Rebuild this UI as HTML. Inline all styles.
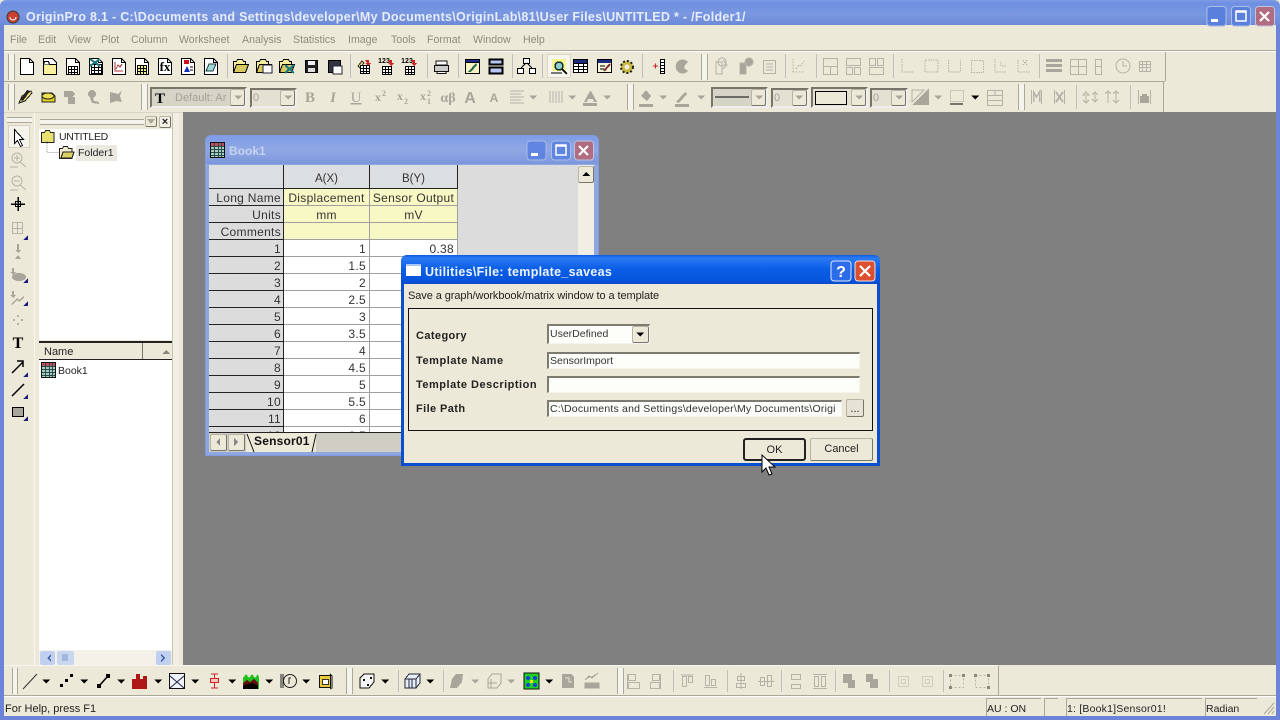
<!DOCTYPE html>
<html><head><meta charset="utf-8"><title>OriginPro 8.1</title>
<style>
html,body{margin:0;padding:0}
body{width:1280px;height:720px;overflow:hidden;position:relative;background:#ece9d8;font:11px "Liberation Sans",sans-serif;color:#000}
div{position:absolute;box-sizing:border-box}
.t{white-space:nowrap;line-height:16px}
.m{color:#8f8c80;top:32px;font-size:10.6px}
.r{text-align:right}
.c{text-align:center}
.b{font-weight:bold}
.cell,.hd,.y{font-size:12px;letter-spacing:.3px;line-height:18px;height:17px;color:#333;white-space:nowrap}
.cell{background:#fff;border-right:1px solid #a0a0a0;border-bottom:1px solid #a0a0a0;text-align:right;padding-right:3px}
.hd{background:#dcdcdc;border-right:1px solid #222;border-bottom:1px solid #222;text-align:right;padding-right:2px}
.y{background:#f8f8c4;border-right:1px solid #a0a0a0;border-bottom:1px solid #a0a0a0;text-align:center}
.in{background:#fdfdfa;border-top:2px solid #7d7b70;border-left:2px solid #7d7b70;border-bottom:1px solid #f5f4ec;border-right:1px solid #f5f4ec;line-height:15px;padding-left:1px;color:#333;white-space:nowrap;overflow:hidden}
.sep{width:2px;background:linear-gradient(90deg,#aca899,#fff)}
.cb{background:#e4e1d2;border:2px solid #77756a;border-right-color:#eee;border-bottom-color:#eee}
.btn{background:#ece9d8;border:1px solid #b8b5a6;border-right-color:#77756a;border-bottom-color:#77756a;border-radius:2px;text-align:center;color:#222}
</style></head><body>

<!-- title bar -->
<div style="left:0;top:0;width:1280px;height:25px;background:linear-gradient(180deg,#7f9be4 0,#6e90e2 3px,#7a97e0 14px,#6b8ad8 25px);border-radius:6px 6px 0 0"></div>
<div class="t b" style="left:26px;top:9px;font-size:12.5px;color:#e6ecfa;letter-spacing:.29px">OriginPro 8.1 - C:\Documents and Settings\developer\My Documents\OriginLab\81\User Files\UNTITLED * - /Folder1/</div>

<!-- frame sides -->
<div style="left:0;top:25px;width:4px;height:695px;background:#6c84d8"></div>
<div style="left:1276px;top:25px;width:4px;height:695px;background:#6c84d8"></div>
<div style="left:0;top:716px;width:1280px;height:4px;background:#6c84d8"></div>

<!-- menu -->
<div class="t m" style="left:10px">File</div>
<div class="t m" style="left:38px">Edit</div>
<div class="t m" style="left:68px">View</div>
<div class="t m" style="left:101px">Plot</div>
<div class="t m" style="left:131px">Column</div>
<div class="t m" style="left:179px">Worksheet</div>
<div class="t m" style="left:242px">Analysis</div>
<div class="t m" style="left:293px">Statistics</div>
<div class="t m" style="left:348px">Image</div>
<div class="t m" style="left:391px">Tools</div>
<div class="t m" style="left:427px">Format</div>
<div class="t m" style="left:473px">Window</div>
<div class="t m" style="left:523px">Help</div>

<!-- toolbar lines -->
<div style="left:4px;top:50px;width:1272px;height:2px;background:linear-gradient(#aca899 50%,#fff 50%)"></div>
<div style="left:4px;top:81px;width:1161px;height:1px;background:#aca899"></div>
<div style="left:1165px;top:52px;width:1px;height:29px;background:#aca899"></div>
<div style="left:1163px;top:82px;width:1px;height:30px;background:#aca899"></div>

<!-- grips row 1 / 2 -->
<div style="left:8px;top:54px;width:7px;height:26px;border-left:1px solid #aca899;border-right:1px solid #aca899;background:#f5f4ec"></div>
<div style="left:8px;top:84px;width:7px;height:26px;border-left:1px solid #aca899;border-right:1px solid #aca899;background:#f5f4ec"></div>
<div style="left:141px;top:84px;width:7px;height:26px;border-left:1px solid #aca899;border-right:1px solid #aca899;background:#f5f4ec"></div>
<div style="left:627px;top:84px;width:7px;height:26px;border-left:1px solid #aca899;border-right:1px solid #aca899;background:#f5f4ec"></div>
<div style="left:701px;top:54px;width:7px;height:26px;border-left:1px solid #aca899;border-right:1px solid #aca899;background:#f5f4ec"></div>
<div style="left:1018px;top:84px;width:7px;height:26px;border-left:1px solid #aca899;border-right:1px solid #aca899;background:#f5f4ec"></div>

<!-- separators row 1 -->
<div class="sep" style="left:227px;top:54px;height:24px"></div>
<div class="sep" style="left:350px;top:54px;height:24px"></div>
<div class="sep" style="left:427px;top:54px;height:24px"></div>
<div class="sep" style="left:458px;top:54px;height:24px"></div>
<div class="sep" style="left:512px;top:54px;height:24px"></div>
<div class="sep" style="left:542px;top:54px;height:24px"></div>
<div class="sep" style="left:642px;top:54px;height:24px"></div>
<div class="sep" style="left:785px;top:54px;height:24px"></div>
<div class="sep" style="left:816px;top:54px;height:24px"></div>
<div class="sep" style="left:893px;top:54px;height:24px"></div>
<div class="sep" style="left:1039px;top:54px;height:24px"></div>
<div class="sep" style="left:1076px;top:85px;height:24px"></div>
<div class="sep" style="left:1130px;top:85px;height:24px"></div>

<!-- active toggle button -->
<div style="left:547px;top:54px;width:24px;height:24px;background:#f6f5ee;border:1px solid #d9d6c6"></div>

<!-- row 2 combos -->
<div class="cb" style="left:150px;top:87px;width:97px;height:21px;background:#d6d3c7"></div>
<div class="t" style="left:175px;top:90px;color:#a5a296">Default: Ar</div>
<div class="btn" style="left:230px;top:89px;width:15px;height:17px"></div>
<div class="cb" style="left:250px;top:88px;width:47px;height:20px"></div>
<div class="t" style="left:253px;top:90px;color:#a5a296">0</div>
<div class="btn" style="left:280px;top:90px;width:15px;height:16px"></div>
<div class="cb" style="left:711px;top:87px;width:57px;height:21px;background:#d6d3c7"></div>
<div class="btn" style="left:751px;top:89px;width:15px;height:17px"></div>
<div class="cb" style="left:771px;top:88px;width:38px;height:20px"></div>
<div class="t" style="left:774px;top:90px;color:#a5a296">0</div>
<div class="btn" style="left:792px;top:90px;width:15px;height:16px"></div>
<div class="cb" style="left:811px;top:87px;width:57px;height:21px;background:#e4e1d2"></div>
<div class="btn" style="left:851px;top:89px;width:15px;height:17px"></div>
<div class="cb" style="left:870px;top:88px;width:38px;height:20px"></div>
<div class="t" style="left:873px;top:90px;color:#a5a296">0</div>
<div class="btn" style="left:891px;top:90px;width:15px;height:16px"></div>

<!-- MDI client -->
<div style="left:183px;top:112px;width:1093px;height:553px;background:#808080"></div>
<div style="left:4px;top:112px;width:179px;height:1px;background:#d8d5c6"></div>

<!-- left tool bar -->
<div style="left:7px;top:117px;width:25px;height:6px;border-top:1px solid #aca899;border-bottom:1px solid #aca899;background:#f5f4ec"></div>
<div style="left:8px;top:125px;width:22px;height:23px;background:#f5f4ec;border:1px solid #d4d1c2"></div>
<div style="left:34px;top:113px;width:1px;height:552px;background:#f8f7f0"></div>

<!-- project explorer -->
<div style="left:40px;top:119px;width:104px;height:6px;border-top:1px solid #aca899;border-bottom:1px solid #aca899;background:#f5f4ec"></div>
<div class="btn" style="left:145px;top:116px;width:12px;height:11px"></div>
<div class="btn b" style="left:159px;top:116px;width:12px;height:12px;line-height:10px;background:#f3f1e6;font-size:11px">×</div>
<div style="left:39px;top:129px;width:133px;height:211px;background:#fff"></div>
<div style="left:76px;top:145px;width:41px;height:16px;background:#ece9e0"></div>
<div class="t" style="left:59px;top:129px;color:#222;font-size:10.5px;letter-spacing:-.3px">UNTITLED</div>
<div class="t" style="left:78px;top:145px;color:#222;font-size:10.5px">Folder1</div>
<div style="left:39px;top:341px;width:133px;height:2px;background:#222"></div>
<div style="left:39px;top:343px;width:104px;height:16px;background:#ece9d8;border-right:1px solid #77756a"></div>
<div style="left:143px;top:343px;width:29px;height:16px;background:#ece9d8"></div>
<div class="t" style="left:44px;top:344px;color:#222">Name</div>
<div style="left:39px;top:359px;width:133px;height:1px;background:#222"></div>
<div style="left:39px;top:360px;width:133px;height:290px;background:#fff"></div>
<div class="t" style="left:58px;top:363px;color:#222;font-size:10.5px">Book1</div>
<div style="left:39px;top:650px;width:133px;height:15px;background:#f3f1e8"></div>
<div style="left:40px;top:651px;width:15px;height:14px;background:#c1d0f0;border-radius:2px"></div>
<div style="left:57px;top:651px;width:17px;height:14px;background:#c9d6f0;border-radius:2px"></div>
<div style="left:156px;top:651px;width:15px;height:14px;background:#c1d0f0;border-radius:2px"></div>
<div style="left:172px;top:113px;width:1px;height:552px;background:#c9c6b6"></div>
<div style="left:173px;top:113px;width:6px;height:552px;background:#f1efe4"></div>

<!-- Book1 window -->
<div style="left:205px;top:135px;width:394px;height:321px;background:#8fa6de;border:1px solid #7f9ae0;border-radius:6px 6px 0 0"></div>
<div style="left:206px;top:136px;width:392px;height:28px;background:linear-gradient(180deg,#7e9ce6,#90a8e4 50%,#7c96dc);border-radius:6px 6px 0 0"></div>
<div class="t b" style="left:229px;top:143px;font-size:12px;color:#c5d2f0">Book1</div>
<div style="left:209px;top:165px;width:369px;height:268px;background:#dcdcdc;overflow:hidden">
  <div style="left:0;top:0;width:75px;height:24px;background:#dcdfe2;border-right:1px solid #222;border-bottom:1px solid #222"></div>
  <div class="c" style="left:75px;top:0;width:86px;height:24px;background:#dcdfe2;border-right:1px solid #222;border-bottom:1px solid #222;line-height:28px;color:#333;font-size:11.5px">A(X)</div>
  <div class="c" style="left:161px;top:0;width:88px;height:24px;background:#dcdfe2;border-right:1px solid #222;border-bottom:1px solid #222;line-height:28px;color:#333;font-size:11.5px">B(Y)</div>

  <div class="hd" style="left:0;top:24px;width:75px">Long Name</div><div class="y" style="left:75px;top:24px;width:86px">Displacement</div><div class="y" style="left:161px;top:24px;width:88px">Sensor Output</div>
  <div class="hd" style="left:0;top:41px;width:75px">Units</div><div class="y" style="left:75px;top:41px;width:86px">mm</div><div class="y" style="left:161px;top:41px;width:88px">mV</div>
  <div class="hd" style="left:0;top:58px;width:75px">Comments</div><div class="y" style="left:75px;top:58px;width:86px"></div><div class="y" style="left:161px;top:58px;width:88px"></div>

  <div class="hd" style="left:0;top:75px;width:75px">1</div><div class="cell" style="left:75px;top:75px;width:86px">1</div><div class="cell" style="left:161px;top:75px;width:88px">0.38</div>
  <div class="hd" style="left:0;top:92px;width:75px">2</div><div class="cell" style="left:75px;top:92px;width:86px">1.5</div><div class="cell" style="left:161px;top:92px;width:88px"></div>
  <div class="hd" style="left:0;top:109px;width:75px">3</div><div class="cell" style="left:75px;top:109px;width:86px">2</div><div class="cell" style="left:161px;top:109px;width:88px"></div>
  <div class="hd" style="left:0;top:126px;width:75px">4</div><div class="cell" style="left:75px;top:126px;width:86px">2.5</div><div class="cell" style="left:161px;top:126px;width:88px"></div>
  <div class="hd" style="left:0;top:143px;width:75px">5</div><div class="cell" style="left:75px;top:143px;width:86px">3</div><div class="cell" style="left:161px;top:143px;width:88px"></div>
  <div class="hd" style="left:0;top:160px;width:75px">6</div><div class="cell" style="left:75px;top:160px;width:86px">3.5</div><div class="cell" style="left:161px;top:160px;width:88px"></div>
  <div class="hd" style="left:0;top:177px;width:75px">7</div><div class="cell" style="left:75px;top:177px;width:86px">4</div><div class="cell" style="left:161px;top:177px;width:88px"></div>
  <div class="hd" style="left:0;top:194px;width:75px">8</div><div class="cell" style="left:75px;top:194px;width:86px">4.5</div><div class="cell" style="left:161px;top:194px;width:88px"></div>
  <div class="hd" style="left:0;top:211px;width:75px">9</div><div class="cell" style="left:75px;top:211px;width:86px">5</div><div class="cell" style="left:161px;top:211px;width:88px"></div>
  <div class="hd" style="left:0;top:228px;width:75px">10</div><div class="cell" style="left:75px;top:228px;width:86px">5.5</div><div class="cell" style="left:161px;top:228px;width:88px"></div>
  <div class="hd" style="left:0;top:245px;width:75px">11</div><div class="cell" style="left:75px;top:245px;width:86px">6</div><div class="cell" style="left:161px;top:245px;width:88px"></div>
  <div class="hd" style="left:0;top:262px;width:75px">12</div><div class="cell" style="left:75px;top:262px;width:86px">6.5</div><div class="cell" style="left:161px;top:262px;width:88px"></div>
</div>
<div style="left:578px;top:165px;width:16px;height:268px;background:#f1efe4"></div>
<div class="btn" style="left:578px;top:166px;width:16px;height:17px"></div>
<div style="left:209px;top:432px;width:385px;height:20px;background:#cfcdc4;border-top:1px solid #222"></div>
<div class="btn" style="left:210px;top:434px;width:17px;height:17px"></div>
<div class="btn" style="left:228px;top:434px;width:17px;height:17px"></div>
<div style="left:246px;top:433px;width:70px;height:19px;background:#ece9d8"></div>
<div class="t b" style="left:254px;top:433px;font-size:12px;color:#111;letter-spacing:.2px">Sensor01</div>

<!-- dialog -->
<div style="left:401px;top:255px;width:479px;height:211px;background:#ece9d8;border:3px solid #0a4fd0;border-top:0;border-radius:6px 6px 0 0"></div>
<div style="left:401px;top:255px;width:479px;height:29px;background:linear-gradient(180deg,#0a5ae0,#2c7af2 3px,#0a5ee6 14px,#0654dc 26px,#0a48c4);border-radius:6px 6px 0 0"></div>
<div style="left:406px;top:264px;width:15px;height:12px;background:#fff;border-top:2px solid #a9c6f5"></div>
<div class="t b" style="left:425px;top:264px;font-size:12.5px;color:#eef3fd;letter-spacing:.3px">Utilities\File: template_saveas</div>
<div class="t" style="left:408px;top:288px;color:#222;letter-spacing:-.08px">Save a graph/workbook/matrix window to a template</div>
<div style="left:408px;top:308px;width:465px;height:123px;border:1px solid #111"></div>
<div class="t b" style="left:416px;top:328px;color:#222;letter-spacing:.4px">Category</div>
<div class="t b" style="left:416px;top:353px;color:#222;letter-spacing:.55px">Template Name</div>
<div class="t b" style="left:416px;top:377px;color:#222;letter-spacing:.5px">Template Description</div>
<div class="t b" style="left:416px;top:401px;color:#222;letter-spacing:.4px">File Path</div>
<div class="in" style="left:547px;top:324px;width:103px;height:20px;line-height:17px;font-size:10.5px">UserDefined</div>
<div class="btn" style="left:632px;top:326px;width:17px;height:17px"></div>
<div class="in" style="left:547px;top:352px;width:313px;height:17px;font-size:10.5px">SensorImport</div>
<div class="in" style="left:547px;top:376px;width:313px;height:17px"></div>
<div class="in" style="left:547px;top:400px;width:295px;height:17px;font-size:10.5px;letter-spacing:.2px">C:\Documents and Settings\developer\My Documents\Origi</div>
<div class="btn" style="left:846px;top:399px;width:18px;height:18px;line-height:18px;background:#e6e3d4">...</div>
<div class="btn" style="left:743px;top:438px;width:63px;height:23px;line-height:21px;border:2px solid #222;border-radius:3px">OK</div>
<div class="btn" style="left:810px;top:438px;width:63px;height:23px;line-height:21px">Cancel</div>

<!-- bottom toolbar -->
<div style="left:4px;top:665px;width:995px;height:31px;border-top:1px solid #f7f6ee;border-right:1px solid #aca899"></div>
<div style="left:4px;top:695px;width:1272px;height:2px;background:linear-gradient(#aca899 50%,#fff 50%)"></div>
<div style="left:12px;top:668px;width:6px;height:26px;border-left:1px solid #aca899;border-right:1px solid #aca899;background:#f5f4ec"></div>
<div style="left:346px;top:668px;width:7px;height:26px;border-left:1px solid #aca899;border-right:1px solid #aca899;background:#f5f4ec"></div>
<div style="left:617px;top:668px;width:7px;height:26px;border-left:1px solid #aca899;border-right:1px solid #aca899;background:#f5f4ec"></div>
<div class="sep" style="left:398px;top:670px;height:22px"></div>
<div class="sep" style="left:443px;top:670px;height:22px"></div>
<div class="sep" style="left:673px;top:670px;height:22px"></div>
<div class="sep" style="left:727px;top:670px;height:22px"></div>
<div class="sep" style="left:781px;top:670px;height:22px"></div>
<div class="sep" style="left:835px;top:670px;height:22px"></div>
<div class="sep" style="left:889px;top:670px;height:22px"></div>
<div class="sep" style="left:943px;top:670px;height:22px"></div>

<!-- status -->
<div class="t" style="left:5px;top:701px;color:#222">For Help, press F1</div>
<div style="left:986px;top:698px;width:55px;height:18px;border-top:1px solid #aca899;border-left:1px solid #aca899"></div>
<div class="t" style="left:987px;top:701px;color:#222;font-size:10.5px">AU : ON</div>
<div style="left:1044px;top:698px;width:14px;height:18px;border-top:1px solid #aca899;border-left:1px solid #aca899"></div>
<div style="left:1066px;top:698px;width:136px;height:18px;border-top:1px solid #aca899;border-left:1px solid #aca899"></div>
<div class="t" style="left:1067px;top:701px;color:#222;font-size:10.5px;letter-spacing:.2px">1: [Book1]Sensor01!</div>
<div style="left:1205px;top:698px;width:52px;height:18px;border-top:1px solid #aca899;border-left:1px solid #aca899"></div>
<div class="t" style="left:1206px;top:701px;color:#222;font-size:10.5px">Radian</div>

<!-- icons -->
<svg width="1280" height="720" viewBox="0 0 1280 720" style="position:absolute;left:0;top:0;pointer-events:none" shape-rendering="crispEdges">
<defs>
<g id="doc"><path d="M-6.500-7.500h9l4 4v12h-13z" fill="#fff" stroke="#000"/><path d="M2.500-7.500v4h4" fill="none" stroke="#000"/></g>
<g id="ydoc"><path d="M-6.500-7.500h9l4 4v12h-13z" fill="#fff" stroke="#000"/><path d="M-6.500-1.500h13v10h-13z" fill="#f8f09a" stroke="#000"/><path d="M-6.500-1.500l1-3h4l1 3" fill="#fff" stroke="#000"/></g>
<g id="grd"><path d="M-3.500-.5h9v8h-9zM-3.500 2.500h9M-3.500 5.500h9M-.5-.5v8M2.500-.5v8" fill="#fff" stroke="#000"/></g>
<g id="wb"><use href="#doc"/><path d="M-4.500-1.500h10v9h-10zM-4.500 1.500h10M-4.500 4.500h10M-1.500-1.500v9M2.500-1.500v9" fill="none" stroke="#000"/></g>
<g id="gd"><path d="M-5.500-4.500h11v10h-11zM-5.500-1.500h11M-5.500 1.500h11M-2.500-4.500v10M1.500-4.500v10" fill="none" stroke="#b5b2a7"/></g>
<g id="fold"><path d="M-8.500 6.500v-11h3l1-2h5l1 2h2v3" fill="#f6ee9a" stroke="#000"/><path d="M-8.500 6.500l3-8h12l-3 8z" fill="#d8c860" stroke="#000"/></g>
<path id="ar" d="M-4-1.500h8l-4 4z" fill="#000"/>
<path id="ag" d="M-4-1.500h8l-4 4z" fill="#a8a59a"/>
<g id="book"><rect x="-7.500" y="-7.500" width="14" height="15" fill="#a8d0c0" stroke="#111"/><rect x="-7" y="-7" width="13" height="3" fill="#c05060"/><path d="M-7-3.500h13M-7-.5h13M-7 2.500h13M-7 5.500h13M-3.500-7v14M.5-7v14M3.500-7v14" stroke="#2a4a4a" fill="none"/></g>
<path id="ftri" d="M0 0l5-5v5z" fill="#1a1a80"/>
</defs>

<!-- app icon -->
<g shape-rendering="auto"><circle cx="13" cy="17" r="6" fill="#c84030" stroke="#3a3a3a"/><path d="M10 17a3 3 0 1 0 6 0" stroke="#fff" fill="none"/></g>
<!-- caption buttons main -->
<g shape-rendering="auto">
<rect x="1207" y="6.500" width="19" height="19.500" rx="3" fill="#5a80dc" stroke="#a9bde8"/><rect x="1211" y="19" width="7" height="3" fill="#fff"/>
<rect x="1231.500" y="6.500" width="19" height="19.500" rx="3" fill="#5a80dc" stroke="#a9bde8"/><path d="M1236 11h10v10h-10zM1236 12h10" fill="none" stroke="#fff" stroke-width="1.500"/>
<rect x="1255.500" y="6.500" width="19" height="19.500" rx="3" fill="#b06c80" stroke="#c0c4e0"/><path d="M1260 12l9 9M1269 12l-9 9" stroke="#fff" stroke-width="2.200"/>
<rect x="527" y="141" width="19" height="19" rx="3" fill="#5f85e0" stroke="#a9bde8"/><rect x="531" y="153" width="7" height="3" fill="#fff"/>
<rect x="551.500" y="141" width="19" height="19" rx="3" fill="#5f85e0" stroke="#a9bde8"/><path d="M556 145h10v10h-10zM556 146h10" fill="none" stroke="#fff" stroke-width="1.500"/>
<rect x="574.500" y="141" width="19" height="19" rx="3" fill="#b06c80" stroke="#c0c4e0"/><path d="M579 146l9 9M588 146l-9 9" stroke="#fff" stroke-width="2.200"/>
<rect x="831" y="261" width="20" height="20" rx="3" fill="#2d6ce8" stroke="#e0e8fa"/><text x="841" y="277" font-family="Liberation Sans" font-weight="bold" font-size="16" fill="#fff" text-anchor="middle">?</text>
<rect x="855" y="261" width="20" height="20" rx="3" fill="#dc5030" stroke="#f4e0d8"/><path d="M860 266l10 10M870 266l-10 10" stroke="#fff" stroke-width="2.200"/>
</g>

<!-- row 1 -->
<use href="#doc" x="27" y="66"/>
<use href="#ydoc" x="50" y="66"/>
<use href="#doc" x="73" y="66"/><use href="#grd" x="72" y="67"/>
<use href="#wb" x="96" y="66"/><path d="M90 59l10 7M100 59l-10 7" stroke="#1a7a80" stroke-width="2"/>
<use href="#doc" x="119" y="66"/><path d="M115 62v9h8M116 69l2-4 2 2 2-3" fill="none" stroke="#b03030"/>
<use href="#doc" x="142" y="66"/><path d="M137.500 65.500h9v9h-9zM137.500 68.500h9M137.500 71.500h9M140.500 65.500v9M143.500 65.500v9" fill="#f2ee90" stroke="#000"/>
<use href="#doc" x="165" y="66"/><text x="165" y="71" font-family="Liberation Serif" font-weight="bold" font-size="13" text-anchor="middle">fx</text>
<use href="#doc" x="188" y="66"/><rect x="184" y="60" width="5" height="4" fill="#d01020"/><path d="M187 66l-3 6h6z" fill="#1030c0"/><path d="M190 67h3M190 70h3" stroke="#000"/>
<use href="#doc" x="211" y="66"/><path d="M206 71l3-7h7l-3 7z" fill="#a0d8d8" stroke="#204040"/>
<use href="#fold" x="242" y="66"/>
<use href="#fold" x="265" y="66"/><rect x="263" y="65" width="9" height="8" fill="#fff" stroke="#223"/>
<use href="#fold" x="288" y="66"/><path d="M285 65l9 8M294 65l-9 8" stroke="#1a7a80" stroke-width="2"/>
<path d="M305.500 60.500h12v12h-12z" fill="#222" stroke="#000"/><rect x="308" y="61" width="7" height="4" fill="#eee"/><rect x="308" y="68" width="7" height="4" fill="#ddd"/>
<path d="M328.500 60.500h12v12h-12z" fill="#334" stroke="#000"/><rect x="333" y="66" width="9" height="8" fill="#fff" stroke="#223"/>
<path d="M358 66l4-5 2 2-4 5z" fill="#e0d060" stroke="#333"/><path d="M365 60h4v3h2l-3 3-3-3h2z" fill="#d02020"/><use href="#grd" x="364" y="66"/>
<text x="384" y="63" font-size="7" font-weight="bold" font-family="Liberation Sans" text-anchor="middle">123</text><path d="M388 60h4v3h2l-3 3-3-3h2z" fill="#d02020"/><use href="#grd" x="386" y="67"/>
<text x="407" y="63" font-size="7" font-weight="bold" font-family="Liberation Sans" text-anchor="middle">123</text><path d="M411 60h4v3h2l-3 3-3-3h2z" fill="#d02020"/><use href="#grd" x="409" y="67"/>
<path d="M436 61h11v4h-11z" fill="#fff" stroke="#111"/><path d="M434.500 65.500h14v6h-14z" fill="#ccc" stroke="#111"/><path d="M437 71.500h9v2h-9z" fill="#fff" stroke="#111"/>
<path d="M465.500 59.500h14v14h-14z" fill="#f8f4c0" stroke="#000"/><path d="M465.500 59.500h14v3h-14z" fill="#1a2a90" stroke="#000"/><path d="M468 72l8-9 1 2-6 7z" fill="#2a6a50"/>
<path d="M489.500 59.500h13v5h-13zM489.500 67.500h13v6h-13z" fill="#b8c8f4" stroke="#000" stroke-width="2"/>
<path d="M523.500 58.500h6v5h-6zM517.500 68.500h6v5h-6zM529.500 68.500h6v5h-6zM526 63l-5 5M527 63l5 5" fill="#fff" stroke="#000"/>
<rect x="552" y="59" width="14" height="12" fill="#f8f490"/><circle cx="559" cy="66" r="4" fill="#90d0d0" stroke="#103030" stroke-width="1.500"/><path d="M562 69l5 5" stroke="#000" stroke-width="2"/><path d="M551 73h11" stroke="#000"/>
<path d="M573.500 59.500h14v13h-14zM573.500 63.500h14M573.500 66.500h14M573.500 69.500h14M578.500 63.500v9M583.500 63.500v9" fill="#fff" stroke="#000"/><rect x="574" y="60" width="13" height="3" fill="#1a2a80"/>
<path d="M597.500 59.500h14v13h-14z" fill="#f8f4d8" stroke="#000"/><rect x="598" y="60" width="13" height="3" fill="#1a2a80"/><path d="M600 66h5M600 69h4" stroke="#000"/><path d="M604 71l6-7" stroke="#803030" stroke-width="2"/>
<g shape-rendering="auto"><circle cx="627" cy="67" r="6" fill="#c8b840" stroke="#222" stroke-width="2" stroke-dasharray="2 2"/><circle cx="627" cy="67" r="2.500" fill="#f4ece0"/></g>
<path d="M653 66h5M655.500 63.500v5" stroke="#d02020"/><path d="M660.500 59.500h4v14h-4zM660.500 62.500h4M660.500 65.500h4M660.500 68.500h4M660.500 71.500h4" fill="#fff" stroke="#000"/>
<g shape-rendering="auto"><path d="M688 62a7 7 0 1 0 0 9l-4-3 1-3z" fill="#a8a59a"/></g>
<g fill="none" stroke="#b5b2a7">
<path d="M716 62h6v12h-6zM723 60l4 5-4 4M722 58a4 4 0 1 1-.1 0z"/><path d="M740 63h6v11h-6zM749 58a4 4 0 1 1-.1 0z" fill="#a8a59a"/>
<path d="M763.500 60.500h12v13h-12zM766 64h7M766 67h7M766 70h7"/>
<path d="M793 72h12M793 72v-13M796 69l3-4 2 1 3-5" stroke-dasharray="1.500 1.500"/>
<path d="M823.500 58.500h14v16h-14zM823.500 66.500h14M830.500 66.500v8"/><path d="M846.500 58.500h14v7h-14zM846.500 67.500h6v7h-6zM854.500 67.500h6v7h-6z"/><path d="M869.500 58.500h6v7h-6zM877.500 58.500h6v7h-6zM869.500 67.500h14v7h-14z"/>
<path d="M902 59v13h11" stroke-dasharray="1.500 1"/><path d="M925 72v-12h13v12h-13" stroke-dasharray="1.500 1"/><path d="M948.500 60v12h12v-12" stroke-dasharray="1.500 1"/><path d="M971.500 60.500h12v12h-12z" stroke-dasharray="1.500 1"/><path d="M995 59v13h11M1001 62v4h5" stroke-dasharray="1.500 1"/><path d="M1018 60v12h12M1023 60l4 5M1027 60l-4 5" stroke-dasharray="1.500 1"/>
<path d="M1070.500 59.500h16v15h-16zM1070.500 66.500h16M1078.500 59.500v15"/><path d="M1095.500 59.500h6v15h-6zM1095.500 66.500h6"/>
</g>
<g fill="#a8a59a"><rect x="1046" y="59" width="16" height="3"/><rect x="1046" y="64" width="16" height="3"/><rect x="1046" y="69" width="16" height="3"/></g>
<g shape-rendering="auto" fill="none" stroke="#b5b2a7"><circle cx="1123" cy="66" r="7"/><path d="M1123 61v5h4"/></g>
<use href="#gd" x="1145" y="66"/>

<!-- row 2 -->
<path d="M19 103l3-7 9-5 1 2-7 8z" fill="#f2e070" stroke="#222"/><path d="M27 90l3 1-7 10-3-1z" fill="#222"/>
<g shape-rendering="auto"><path d="M42 93h10l3 3v6H42z" fill="#e0d020" stroke="#222"/><ellipse cx="48" cy="96" rx="6" ry="3" fill="#f0e050" stroke="#222"/></g>
<g fill="#a8a59a"><path d="M64 91h8l3 3-3 3h-8zM68 97h7v7h-7z"/><circle cx="92" cy="94" r="4"/><path d="M90 98l2 5 7 1v-2l-5-1-1-3z"/><path d="M110 92l8 2 4-4-2 6 2 6-6-1-6 2z"/></g>

<g font-family="Liberation Serif" font-weight="bold" text-anchor="middle" fill="#000" font-size="15"><text x="160" y="103" shape-rendering="auto">T</text></g>
<g font-family="Liberation Serif" font-weight="bold" fill="#a8a59a" text-anchor="middle" font-size="15">
<text x="310" y="102">B</text><text x="333" y="102" font-style="italic">I</text><text x="356" y="102" text-decoration="underline" font-weight="normal">U</text>
<text x="378" y="101" font-size="12">x</text><text x="384" y="96" font-size="8">2</text>
<text x="400" y="100" font-size="12">x</text><text x="406" y="104" font-size="8">2</text>
<text x="423" y="100" font-size="12">x</text><text x="429" y="96" font-size="8">2</text><text x="429" y="104" font-size="8">1</text>
<text x="448" y="102" font-size="14">αβ</text><text x="470" y="103" font-size="16" font-family="Liberation Sans">A</text><text x="494" y="102" font-size="12" font-family="Liberation Sans">A</text>
</g>
<path d="M510 91h14M510 94h11M510 97h14M510 100h11M510 103h14" stroke="#b5b2a7"/>
<path d="M550 91v12M553 91v12M556 91v12M559 91v12M562 91v12" stroke="#b5b2a7"/>
<g><use href="#ag" x="533" y="97"/><use href="#ag" x="572" y="97"/><use href="#ag" x="607" y="97"/><use href="#ag" x="663" y="97"/><use href="#ag" x="701" y="97"/><use href="#ag" x="938" y="97"/><use href="#ag" x="238" y="97"/><use href="#ag" x="288" y="97"/><use href="#ag" x="759" y="97"/><use href="#ag" x="799" y="97"/><use href="#ag" x="859" y="97"/><use href="#ag" x="899" y="97"/></g>
<use href="#ar" x="975" y="97"/>
<path d="M590 91l-6 11h3l1-3h5l1 3h3l-6-11zM583 103h14v3h-14z" fill="#a8a59a"/>
<path d="M641 96l5-6 5 6-4 5zM639 104h14v3h-14z" fill="#a8a59a"/>
<path d="M676 102l9-10 2 2-8 9zM675 104h14v3h-14z" fill="#a8a59a"/>
<path d="M715 97h34" stroke="#000"/>
<rect x="815.500" y="91.500" width="31" height="13" fill="#ece9d8" stroke="#000"/>
<path d="M912 105l17-17v17z" fill="#a8a59a"/><path d="M912 90l12 0-12 12z" fill="none" stroke="#b5b2a7"/>
<path d="M950.500 90.500h13v11h-13z" fill="none" stroke="#a8a59a" stroke-dasharray="1 1"/><path d="M950 104h13" stroke="#000"/>
<path d="M987.500 90.500h15v15h-15zM987.500 95.500h15M987.500 100.500h15M995 90.500v5" fill="none" stroke="#b5b2a7"/>
<g fill="none" stroke="#b5b2a7"><path d="M1031.500 90v14M1041.500 90v14"/><path d="M1033.500 102v-10l3 5 3-5v10" stroke-width="1.500"/><path d="M1054.500 90v14M1064.500 90v14"/><path d="M1056 92l7 10M1063 92l-7 10" stroke-width="2"/><path d="M1086 92l3 3h-6zM1086 96v6M1095 92v10M1083 100l3 3 3-3M1092 99l3 3 3-3M1092 95l3-3 3 3"/><path d="M1108 91v12M1116 91v12M1105 94l3-3 3 3M1113 100l3 3 3-3M1113 94l3-3 3 3"/><path d="M1138.500 90v14M1150.500 90v14"/></g>
<path d="M1140 96h9v7h-9zM1142 96v-2h5v2" fill="#a8a59a"/>

<!-- left tools -->
<path d="M14.500 129.500v14l3-3 3 6 2-1-3-6h4z" fill="#fff" stroke="#000"/>
<g fill="none" stroke="#b5b2a7" shape-rendering="auto"><circle cx="17" cy="158" r="5"/><path d="M14 158h6M17 155v6M20 162l6 5M10 167h8"/><circle cx="17" cy="181" r="5"/><path d="M14 181h6M20 185l6 5M10 190h8"/></g>
<path d="M11 204h14M18 197v14" stroke="#000" stroke-width="1.500"/><rect x="15.500" y="201.500" width="5" height="5" fill="none" stroke="#000"/>
<g fill="none" stroke="#b5b2a7"><path d="M12.500 222.500h10v11h-10zM17.500 222.500v11M12.500 228.500h10"/></g>
<g fill="#a8a59a"><path d="M17 244v6h-2l3 3 3-3h-2v-6zM15 259l3-4 3 4z"/><path d="M12 268h2v4h2l-3 3-3-3h2z"/><ellipse cx="19" cy="277" rx="7" ry="4"/><path d="M12 291h2v4h2l-3 3-3-3h2z"/><path d="M11 304l6-6 2 2 5-4v2l-5 4-2-2-5 5z"/><circle cx="14" cy="320" r="1"/><circle cx="18" cy="316" r="1"/><circle cx="22" cy="320" r="1"/><circle cx="18" cy="324" r="1"/></g>
<text x="18" y="348" font-family="Liberation Serif" font-weight="bold" font-size="16" text-anchor="middle">T</text>
<g shape-rendering="auto" stroke="#000" fill="none" stroke-width="1.500"><path d="M12 373l11-11M17 361h6v6"/><path d="M12 396l12-12"/></g>
<rect x="12.500" y="407.500" width="11" height="9" fill="#a8a59a" stroke="#000"/>
<use href="#ftri" x="23" y="240"/><use href="#ftri" x="23" y="283"/><use href="#ftri" x="23" y="306"/><use href="#ftri" x="23" y="377"/><use href="#ftri" x="23" y="399"/><use href="#ftri" x="23" y="421"/>

<!-- explorer icons -->
<path d="M147 119h8l-4 5z" fill="#a8a59a"/>
<path d="M41.500 132.500h3l1-2h4l1 2h3.500v10h-12.500z" fill="#e8e070" stroke="#222"/>
<path d="M59.500 148.500h3l1-2h4l1 2h3.500v10h-12.500z" fill="#f0ecd0" stroke="#222"/><path d="M61 158l2-6h11l-2 6z" fill="#d8d060" stroke="#222"/>
<path d="M47 141v11.500h12" stroke="#999" stroke-dasharray="1 1" fill="none"/>
<use href="#book" x="49" y="370"/>
<use href="#book" x="218" y="150"/>
<path d="M162 354l4-4 4 4z" fill="#8a877c"/>
<g fill="#3a5ea8"><path d="M51 654l-4 4 4 4v-2l-2-2 2-2zM161 654l4 4-4 4v-2l2-2-2-2z"/></g>
<path d="M63 654v7M65 654v7M67 654v7" stroke="#7f95c8"/>

<!-- book controls -->
<path d="M582 176l4-4 4 4z" fill="#000"/>
<path d="M216 442l4-4v8zM234 438l4 4-4 4z" fill="#888"/>
<path d="M247 434l7 18M316 434l-4 18" stroke="#111" fill="none" shape-rendering="auto"/>

<!-- dialog combobox arrow -->
<use href="#ar" x="640" y="334"/>
<!-- cursor -->
<path d="M762 455v17l4-4 3 7 3-1-3-7h6z" fill="#fff" stroke="#000" shape-rendering="auto"/>

<!-- bottom icons -->
<path d="M23 689l14-15" stroke="#333" shape-rendering="auto"/>
<g fill="#000"><rect x="60" y="684" width="3" height="3"/><rect x="65" y="679" width="3" height="3"/><rect x="70" y="674" width="3" height="3"/><rect x="97" y="684" width="4" height="4"/><rect x="106" y="674" width="4" height="4"/></g>
<path d="M99 686l9-10" stroke="#000" stroke-width="1.500" shape-rendering="auto"/>
<path d="M132 689v-10h4v-5h4v5h3v-3h4v13z" fill="#b01818"/>
<rect x="169.500" y="673.500" width="15" height="15" fill="#f0f4fc" stroke="#111"/><path d="M170 676l14 12M170 688l14-12" stroke="#224" fill="none" shape-rendering="auto"/>
<path d="M211 674h7M211 688h7M214.500 674v14" stroke="#d02020"/><rect x="210.500" y="678.500" width="8" height="4" fill="#f4c8c0" stroke="#d02020"/>
<path d="M243 689v-11l3-4 3 4 3-4 3 4 3-4 1 4v11z" fill="#20c020"/><path d="M243 689v-6l4-3 3 2 4-3 4 4v6z" fill="#601010"/><path d="M243 689v-3l4-2 6-1 5 3v3z" fill="#000"/>
<g fill="none" stroke="#222" shape-rendering="auto"><path d="M281 674v14M283 674v14"/><circle cx="290" cy="681" r="6.500"/><path d="M289 684v-6h2"/></g>
<path d="M319.500 675.500h11v12h-11z" fill="#eac838" stroke="#111"/><path d="M322.500 679.500h6v5h-6z" fill="#fff" stroke="#333"/><path d="M330 674l2 2v12l-2 1" fill="none" stroke="#111"/>
<path d="M360 678l4-4h10v8l-5 6h-9z" fill="#f4f4f4" stroke="#111"/><g fill="#111"><rect x="363" y="679" width="2" height="2"/><rect x="367" y="684" width="2" height="2"/><rect x="370" y="677" width="2" height="2"/></g>
<path d="M405 679l4-5h11v9l-4 5h-11zM405 679h11v9M416 679l4-5M409 679v9M412 679v9" fill="#e8eef8" stroke="#223"/>
<path d="M452 679l4-5h7l-1 8-5 6h-7z" fill="#a8a59a"/><path d="M488 679l4-5h9v9l-4 5h-9zM488 683h9M491 679v9" fill="none" stroke="#a8a59a"/>
<rect x="524" y="673" width="15" height="16" fill="#20d020" stroke="#111"/><g fill="#1840e0"><circle cx="528" cy="678" r="2"/><circle cx="535" cy="678" r="2"/><circle cx="528" cy="685" r="2"/><circle cx="535" cy="685" r="2"/><rect x="530" y="680" width="3" height="3" fill="#f0e020"/></g>
<path d="M562 674h9l3 3v11h-12z" fill="#a8a59a"/><path d="M565 678h4v4h3" stroke="#ece9d8" fill="none"/>
<path d="M585 688h14v-5h-14zM585 680l4-4 3 2 6-5" fill="#a8a59a" stroke="#a8a59a"/>
<g><use href="#ar" x="46" y="681"/><use href="#ar" x="84" y="681"/><use href="#ar" x="121" y="681"/><use href="#ar" x="158" y="681"/><use href="#ar" x="195" y="681"/><use href="#ar" x="232" y="681"/><use href="#ar" x="269" y="681"/><use href="#ar" x="306" y="681"/><use href="#ar" x="385" y="681"/><use href="#ar" x="430" y="681"/><use href="#ag" x="475" y="681"/><use href="#ag" x="511" y="681"/><use href="#ar" x="549" y="681"/></g>
<g fill="none" stroke="#b5b2a7">
<path d="M628.500 674.500h7v6h-7zM628.500 682.500h11v6h-11zM627.500 674v15M652.500 674.500h7v6h-7zM650.500 682.500h9v6h-9zM660.500 674v15"/>
<path d="M681.500 674v1h12M682.500 676.500h4v10h-4zM688.500 676.500h4v6h-4zM705.500 675.500h4v10h-4zM711.500 679.500h4v6h-4zM704 687.500h13"/>
<path d="M737.500 676.500h7v4h-7zM736.500 683.500h9v4h-9zM741 673v16M760.500 677.500h4v8h-4zM767.500 675.500h4v11h-4zM758 681.500h16"/>
<path d="M791.500 674.500h9v5h-9zM791.500 684.500h9v4h-9zM814.500 676.500h4v10h-4zM821.500 676.500h4v10h-4zM813 674.500h14M813 688.500h14"/>
<path d="M898.500 676.500h10v10h-10zM901.500 679.500h4v4h-4zM922.500 676.500h10v10h-10zM925.500 679.500h4v4h-4z" stroke-dasharray="1 1"/>
<path d="M950.500 675.500h13v12h-13zM975.500 675.500h13v12h-13z" stroke-dasharray="2 2"/>
</g>
<g fill="#a8a59a"><rect x="843" y="674" width="9" height="9"/><rect x="848" y="680" width="7" height="8"/><rect x="866" y="674" width="7" height="8"/><rect x="870" y="679" width="8" height="9"/></g>
<g fill="#8a877c"><rect x="949" y="674" width="3" height="3"/><rect x="962" y="674" width="3" height="3"/><rect x="949" y="686" width="3" height="3"/><rect x="974" y="674" width="3" height="3"/><rect x="987" y="674" width="3" height="3"/><rect x="987" y="686" width="3" height="3"/></g>
<path d="M1264 714l10-11M1268 714l6-7M1272 714l2-3" stroke="#aca899" shape-rendering="auto"/>
</svg>
</body></html>
